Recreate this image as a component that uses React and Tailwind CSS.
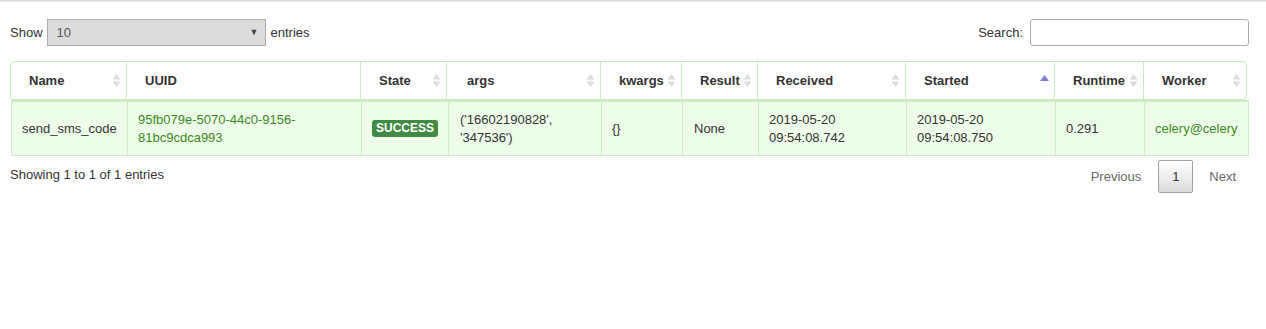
import React from 'react';

const headCols = [
  { label: 'Name', w: 'w-[115px]' },
  { label: 'UUID', w: 'w-[234px]' },
  { label: 'State', w: 'w-[86px]' },
  { label: 'args', w: 'w-[154px]', pad: 'pl-[20px]' },
  { label: 'kwargs', w: 'w-[81px]' },
  { label: 'Result', w: 'w-[76px]' },
  { label: 'Received', w: 'w-[148px]' },
  { label: 'Started', w: 'w-[149px]', asc: true },
  { label: 'Runtime', w: 'w-[89px]' },
  { label: 'Worker', w: 'flex-1' },
];

function SortIcon({ asc }) {
  if (asc) {
    return (
      <svg width="9" height="12" viewBox="0 0 9 12" className="shrink-0">
        <polygon points="0,6 4.5,0 9,6" fill="#7c81d6" />
      </svg>
    );
  }
  return (
    <svg width="9" height="13" viewBox="0 0 9 13" className="shrink-0">
      <polygon points="0.5,5.5 4.5,0 8.5,5.5" fill="#dcdcdc" />
      <polygon points="0.5,7.5 8.5,7.5 4.5,13" fill="#dcdcdc" />
    </svg>
  );
}

function App() {
  return (
    <div className="w-[1266px] h-[329px] bg-white font-['Liberation_Sans',Arial,sans-serif] text-[13px] text-[#333] overflow-hidden">
      <div className="h-[2px] bg-gradient-to-b from-[#d6d6d6] to-[#efefef]" />

      <div className="pl-[10px] pr-[17px]">
        {/* length + search */}
        <div className="flex justify-between items-center mt-[17px] h-[27px]">
          <div className="flex items-center">
            <span>Show</span>
            <div className="ml-[4px] w-[219px] h-[27px] bg-[#dcdcdc] border border-[#aaa] flex items-center justify-between pl-[9px] pr-[6px] text-[#555]">
              <span>10</span>
              <span className="text-[9px] text-[#444]">▼</span>
            </div>
            <span className="ml-[5px]">entries</span>
          </div>
          <div className="flex items-center">
            <span>Search:</span>
            <div className="ml-[7px] w-[219px] h-[27px] border border-[#aaa] rounded-[3px] bg-white" />
          </div>
        </div>

        {/* header */}
        <div className="mt-[15px] w-[1237px] h-[39px] border border-[#c9ecc0] rounded-[4px] flex bg-white">
          {headCols.map((c, i) => (
            <div
              key={c.label}
              className={`${c.w} ${i > 0 ? 'border-l border-[#c9ecc0]' : ''} ${c.pad || 'pl-[18px]'} pr-[5px] flex items-center justify-between font-bold`}
            >
              <span>{c.label}</span>
              {c.label !== 'UUID' && <SortIcon asc={c.asc} />}
            </div>
          ))}
        </div>

        {/* body row */}
        <div className="ml-px w-[1238px] h-[56px] border-l border-r border-b border-t-2 border-[#c9ecc0] bg-[#eefde9] flex leading-[18px]">
          <div className="w-[115px] pl-[10px] flex items-center">send_sms_code</div>
          <div className="w-[234px] border-l border-[#c9ecc0] pl-[10px] flex items-center text-[#3b8a1c]">
            <span>95fb079e-5070-44c0-9156-<br />81bc9cdca993</span>
          </div>
          <div className="w-[87px] border-l border-[#c9ecc0] pl-[10px] flex items-center">
            <span className="bg-[#418a44] text-white font-bold text-[12px] leading-[17px] px-[4px] rounded-[3px]">SUCCESS</span>
          </div>
          <div className="w-[153px] border-l border-[#c9ecc0] pl-[11px] flex items-center">
            <span>('16602190828',<br />'347536')</span>
          </div>
          <div className="w-[81px] border-l border-[#c9ecc0] pl-[10px] flex items-center">{'{}'}</div>
          <div className="w-[76px] border-l border-[#c9ecc0] pl-[11px] flex items-center">None</div>
          <div className="w-[148px] border-l border-[#c9ecc0] pl-[10px] flex items-center">
            <span>2019-05-20<br />09:54:08.742</span>
          </div>
          <div className="w-[149px] border-l border-[#c9ecc0] pl-[10px] flex items-center">
            <span>2019-05-20<br />09:54:08.750</span>
          </div>
          <div className="w-[89px] border-l border-[#c9ecc0] pl-[10px] flex items-center">0.291</div>
          <div className="flex-1 border-l border-[#c9ecc0] pl-[10px] flex items-center text-[#3b8a1c]">celery@celery</div>
        </div>

        {/* footer */}
        <div className="flex justify-between items-start">
          <div className="mt-[9px]">Showing 1 to 1 of 1 entries</div>
          <div className="flex items-center mt-[4px]">
            <span className="px-[13px] text-[#666]">Previous</span>
            <div className="ml-[4px] w-[35px] h-[33px] border border-[#a0a0a0] rounded-[2px] bg-gradient-to-b from-white to-[#dcdcdc] flex items-center justify-center">1</div>
            <span className="ml-[3px] px-[13px] text-[#666]">Next</span>
          </div>
        </div>
      </div>
    </div>
  );
}

export default App;
